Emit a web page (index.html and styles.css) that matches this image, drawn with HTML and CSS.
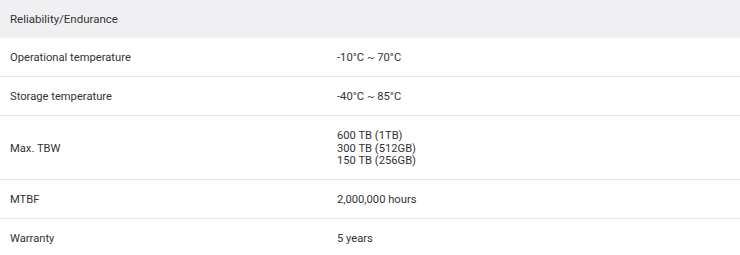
FILE: index.html
```html
<!DOCTYPE html>
<html>
<head>
<meta charset="utf-8">
<link rel="stylesheet" href="styles.css">
</head>
<body>
<section class="specs">
  <div class="specs-head">Reliability/Endurance</div>
  <div class="row">
    <div class="label">Operational temperature</div>
    <div class="value">-10°C ~ 70°C</div>
  </div>
  <div class="row">
    <div class="label">Storage temperature</div>
    <div class="value">-40°C ~ 85°C</div>
  </div>
  <div class="row">
    <div class="label">Max. TBW</div>
    <div class="value">600 TB (1TB)<br>300 TB (512GB)<br>150 TB (256GB)</div>
  </div>
  <div class="row">
    <div class="label">MTBF</div>
    <div class="value">2,000,000 hours</div>
  </div>
  <div class="row last">
    <div class="label">Warranty</div>
    <div class="value">5 years</div>
  </div>
</section>
</body>
</html>
```
FILE: styles.css
```css
html, body {
  margin: 0;
  padding: 0;
  background: #fff;
}
body {
  font-family: Roboto, "Liberation Sans", sans-serif;
  color: #333;
}
.specs {
  width: 740px;
}
.specs-head {
  background: #f0f0f2;
  height: 38px;
  box-sizing: border-box;
  padding: 0 10px;
  display: flex;
  align-items: center;
  font-size: 11.5px;
  color: #333;
}
.row {
  display: grid;
  grid-template-columns: 327px 1fr;
  align-items: center;
  padding: 14px 10px 11.5px;
  font-size: 11.2px;
  line-height: 12.5px;
  border-bottom: 1px solid #e6e6e6;
}
.row.last {
  border-bottom: none;
}
```
